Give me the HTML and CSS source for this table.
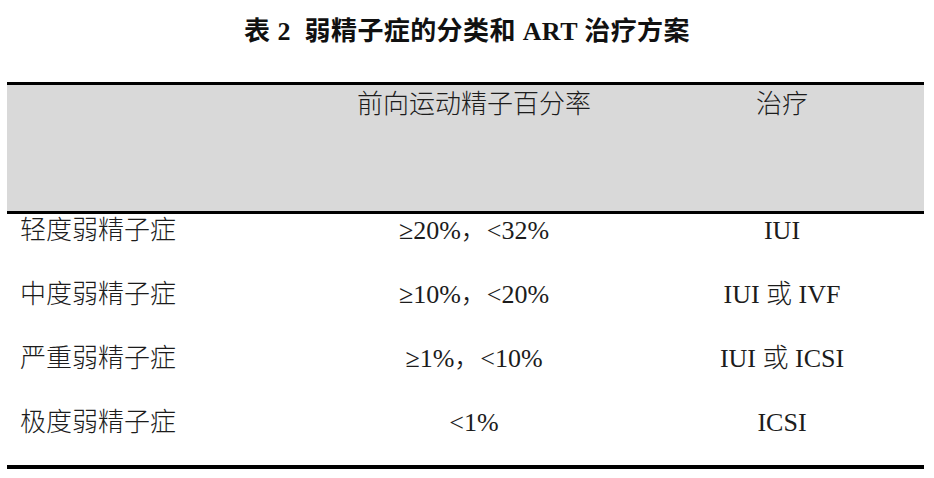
FILE: index.html
```html
<!DOCTYPE html>
<html lang="zh">
<head>
<meta charset="utf-8">
<link rel="stylesheet" href="styles.css">
</head>
<body>
<h1 class="title">表 2&nbsp;&nbsp;弱精子症的分类和 ART 治疗方案</h1>
<div class="table">
  <div class="row head">
    <div class="cell c1"></div>
    <div class="cell c2">前向运动精子百分率</div>
    <div class="cell c3">治疗</div>
  </div>
  <div class="row">
    <div class="cell c1">轻度弱精子症</div>
    <div class="cell c2">≥20%，&lt;32%</div>
    <div class="cell c3">IUI</div>
  </div>
  <div class="row">
    <div class="cell c1">中度弱精子症</div>
    <div class="cell c2">≥10%，&lt;20%</div>
    <div class="cell c3">IUI 或 IVF</div>
  </div>
  <div class="row">
    <div class="cell c1">严重弱精子症</div>
    <div class="cell c2">≥1%，&lt;10%</div>
    <div class="cell c3">IUI 或 ICSI</div>
  </div>
  <div class="row last">
    <div class="cell c1">极度弱精子症</div>
    <div class="cell c2">&lt;1%</div>
    <div class="cell c3">ICSI</div>
  </div>
</div>
</body>
</html>
```
FILE: styles.css
```css
html, body {
  margin: 0;
  padding: 0;
  background: #ffffff;
}
body {
  width: 934px;
  height: 478px;
  overflow: hidden;
  font-family: "Liberation Serif", "Noto Sans CJK SC", serif;
  color: #1c1c1c;
}
.title {
  margin: 17px 0 0 0;
  height: 30px;
  line-height: 30px;
  font-size: 26px;
  font-weight: bold;
  text-align: center;
  letter-spacing: 0.4px;
  color: #111;
}
.table {
  margin: 35px 0 0 7px;
  width: 917px;
  border-bottom: 4px solid #000;
}
.row {
  display: grid;
  grid-template-columns: 301px 332px 284px;
  height: 64px;
}
.row.last {
  height: 59px;
}
.row.head {
  height: 126px;
  background: #d9d9d9;
  border-top: 3px solid #000;
  border-bottom: 3px solid #000;
}
.cell {
  font-size: 26px;
  line-height: 34px;
  font-weight: 300;
}
.head .cell {
  padding-top: 3px;
}
.c1 {
  padding-left: 13px;
}
.c2, .c3 {
  text-align: center;
}
```
